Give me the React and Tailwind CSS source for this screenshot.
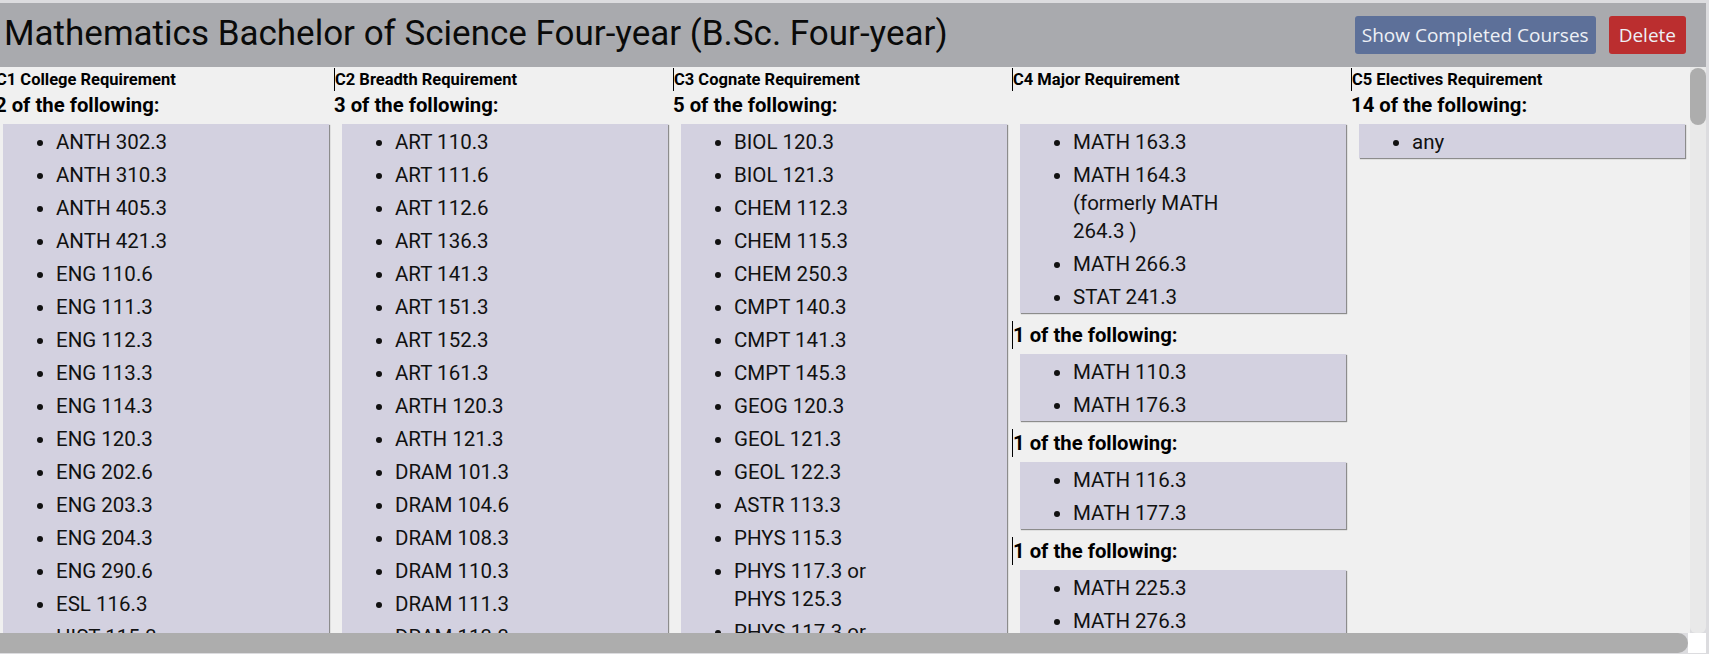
import React from "react";

const columns = [
  {
    title: "C1 College Requirement",
    groups: [
      {
        label: "2 of the following:",
        items: [
          "ANTH 302.3",
          "ANTH 310.3",
          "ANTH 405.3",
          "ANTH 421.3",
          "ENG 110.6",
          "ENG 111.3",
          "ENG 112.3",
          "ENG 113.3",
          "ENG 114.3",
          "ENG 120.3",
          "ENG 202.6",
          "ENG 203.3",
          "ENG 204.3",
          "ENG 290.6",
          "ESL 116.3",
          "HIST 115.3",
          "HIST 116.3",
        ],
      },
    ],
  },
  {
    title: "C2 Breadth Requirement",
    groups: [
      {
        label: "3 of the following:",
        items: [
          "ART 110.3",
          "ART 111.6",
          "ART 112.6",
          "ART 136.3",
          "ART 141.3",
          "ART 151.3",
          "ART 152.3",
          "ART 161.3",
          "ARTH 120.3",
          "ARTH 121.3",
          "DRAM 101.3",
          "DRAM 104.6",
          "DRAM 108.3",
          "DRAM 110.3",
          "DRAM 111.3",
          "DRAM 113.3",
          "DRAM 118.3",
        ],
      },
    ],
  },
  {
    title: "C3 Cognate Requirement",
    groups: [
      {
        label: "5 of the following:",
        items: [
          "BIOL 120.3",
          "BIOL 121.3",
          "CHEM 112.3",
          "CHEM 115.3",
          "CHEM 250.3",
          "CMPT 140.3",
          "CMPT 141.3",
          "CMPT 145.3",
          "GEOG 120.3",
          "GEOL 121.3",
          "GEOL 122.3",
          "ASTR 113.3",
          "PHYS 115.3",
          "PHYS 117.3 or PHYS 125.3",
          "PHYS 117.3 or PHYS 128.3",
        ],
      },
    ],
  },
  {
    title: "C4 Major Requirement",
    groups: [
      {
        label: "",
        items: [
          "MATH 163.3",
          "MATH 164.3 (formerly MATH 264.3 )",
          "MATH 266.3",
          "STAT 241.3",
        ],
      },
      { label: "1 of the following:", items: ["MATH 110.3", "MATH 176.3"] },
      { label: "1 of the following:", items: ["MATH 116.3", "MATH 177.3"] },
      {
        label: "1 of the following:",
        items: ["MATH 225.3", "MATH 276.3", "MATH 277.3"],
      },
    ],
  },
  {
    title: "C5 Electives Requirement",
    groups: [{ label: "14 of the following:", items: ["any"] }],
  },
];

const RequirementColumn = ({ col }) => (
  <div className="w-[339px] shrink-0 pt-[1px]">
    <div className="w-fit h-[23px] leading-[23px] text-[16.5px] font-bold border-l border-black">
      {col.title}
    </div>
    {col.groups.map((g, i) => (
      <div key={i} className={i > 0 ? "mt-[8px]" : ""}>
        <div
          className={
            "w-fit h-[28px] leading-[28px] text-[20.3px] font-bold " +
            (i > 0 ? "border-l border-black" : "")
          }
        >
          {g.label}
        </div>
        <ul className="mt-[5px] ml-[8px] w-[326px] bg-[#d3d1e0] shadow-[1px_1px_1px_#8c8c8c] list-disc pl-[53px] pt-[1px] text-[20.5px] text-[#111]">
          {g.items.map((it) => (
            <li key={it} className="max-w-[160px] leading-[28px] py-[2.5px]">
              {it}
            </li>
          ))}
        </ul>
      </div>
    ))}
  </div>
);

export default function App() {
  return (
    <div className="w-[1709px] h-[654px] bg-[#dcdcdf] flex flex-col overflow-hidden font-['Roboto',sans-serif] text-black">
      <div className="h-[3px] shrink-0" />
      <div className="w-[1706px] h-[64px] shrink-0 bg-[#a9aaae] flex items-center justify-between pl-[4px] pr-[20px]">
        <h1 className="text-[35px] font-normal leading-none pb-[3px] text-[#0a0a0a]">
          Mathematics Bachelor of Science Four-year (B.Sc. Four-year)
        </h1>
        <div className="flex items-center gap-[13px] font-['Open_Sans',sans-serif] text-[19px] text-[#eef0f6]">
          <button className="h-[38px] px-[7px] rounded-[3px] bg-[#5d7099]">
            Show Completed Courses
          </button>
          <button className="h-[38px] px-[10px] rounded-[3px] bg-[#bb2e2f]">
            Delete
          </button>
        </div>
      </div>
      <div className="w-[1706px] h-[586px] shrink-0 flex flex-col">
        <div className="flex-1 flex min-h-0">
          <div className="flex-1 bg-[#f0f0f0] overflow-hidden">
            <div className="flex -ml-[5px]">
              {columns.map((c) => (
                <RequirementColumn key={c.title} col={c} />
              ))}
            </div>
          </div>
          <div className="w-[16px] bg-[#e9e9e9] pt-[1px] rounded-b-[6px]">
            <div className="h-[57px] rounded-full bg-[#adadad]" />
          </div>
        </div>
        <div className="h-[20px] shrink-0 flex">
          <div className="flex-1 bg-[#adadad] rounded-r-full" />
          <div className="w-[18px] bg-white" />
        </div>
      </div>
    </div>
  );
}
